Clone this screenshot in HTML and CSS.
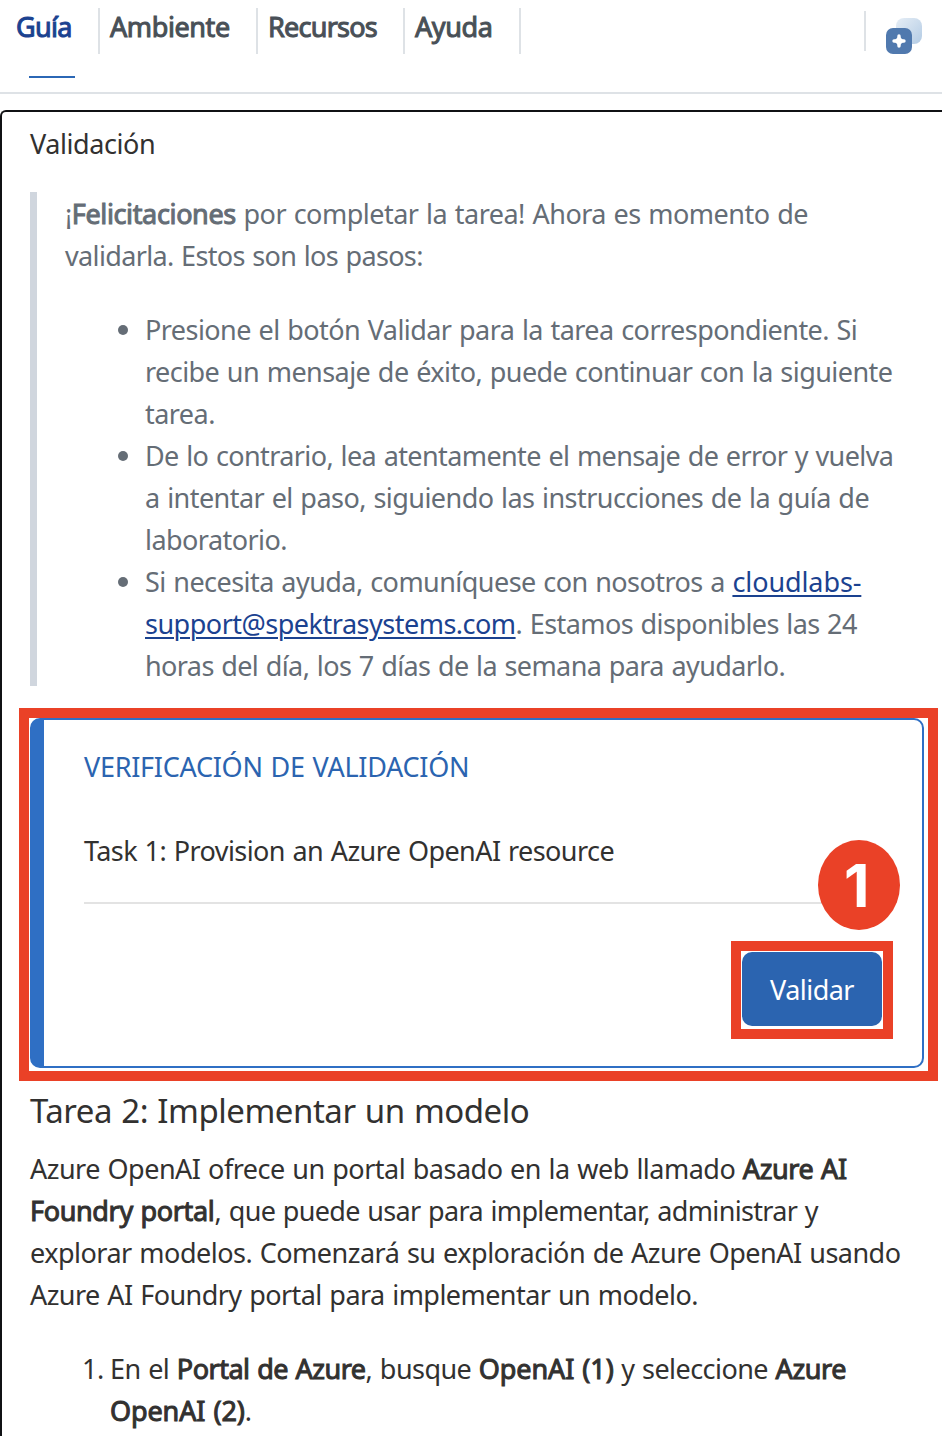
FILE: index.html
```html
<!DOCTYPE html>
<html lang="es">
<head>
<meta charset="utf-8">
<title>Guía</title>
<link rel="stylesheet" href="styles.css">
</head>
<body>
<header class="topbar">
  <nav class="tabs">
    <a class="tab tab-guide active">Guía</a>
    <a class="tab tab-env">Ambiente</a>
    <a class="tab tab-res">Recursos</a>
    <a class="tab tab-help">Ayuda</a>
  </nav>
  <div class="tools">
    <svg class="add-icon" width="36" height="36" viewBox="0 0 36 36">
      <defs><linearGradient id="g" x1="0" y1="0" x2="1" y2="1"><stop offset="0" stop-color="#e6eef6"/><stop offset="1" stop-color="#b3cbe4"/></linearGradient></defs>
      <rect x="10" y="0" width="26" height="26" rx="8" fill="url(#g)"/>
      <rect x="0" y="10" width="26" height="26" rx="7" fill="#5079ae"/>
      <path d="M13 18v10M8 23h10" stroke="#fff" stroke-width="3.400" stroke-linecap="round"/>
      <path d="M13 18l5 5l-5 5l-5-5z" fill="#fff"/>
    </svg>
  </div>
</header>
<main class="guide">
  <p class="subtitle">Validación</p>
  <blockquote class="note">
    <p>¡<b class="b30">Felicitaciones</b> <span class="loose">por completar la tarea! Ahora es momento de</span><br><span class="tight">validarla. Estos son los pasos:</span></p>
    <ul class="list">
      <li><p>Presione el botón Validar para la tarea correspondiente. Si<br>recibe un mensaje de éxito, puede continuar con la siguiente<br>tarea.</p></li>
      <li><p><span class="dense">De lo contrario, lea atentamente el mensaje de error y vuelva</span><br>a intentar el paso, siguiendo las instrucciones de la guía de<br>laboratorio.</p></li>
      <li><p>Si necesita ayuda, comuníquese con nosotros a <a class="link" href="#"><span class="wide">cloudlabs-</span><br><span class="email">support@spektrasystems.com</span></a>. <span class="dense">Estamos disponibles las 24<br>horas del día, los 7 días de la semana para ayudarlo.</span></p></li>
    </ul>
  </blockquote>
  <div class="highlight">
    <section class="card">
      <h3 class="card-title">VERIFICACIÓN DE VALIDACIÓN</h3>
      <p class="card-task">Task 1: Provision an Azure OpenAI resource</p>
      <div class="card-actions">
        <span class="button-highlight"><button class="button">Validar</button></span>
      </div>
      <span class="step">1</span>
    </section>
  </div>
  <h2 class="heading">Tarea 2: Implementar un modelo</h2>
  <p><span class="loose">Azure OpenAI ofrece un portal basado en la web llamado</span> <b>Azure AI</b><br><b class="b30">Foundry portal</b>, <span class="tight">que puede usar para implementar, administrar y</span><br><span class="loose">explorar modelos. Comenzará su exploración de Azure OpenAI usando</span><br>Azure AI Foundry portal para implementar un modelo.</p>
  <ol class="steps">
    <li><span class="num">1.</span><p>En el <b class="b40">Portal de Azure</b>, busque <b class="b0">OpenAI (1)</b> y seleccione <b>Azure</b><br><b class="b0">OpenAI (2)</b>.</p></li>
  </ol>
</main>
</body>
</html>
```
FILE: styles.css
```css
* { box-sizing: border-box; }
html, body { height: 1436px; overflow: hidden; }
body {
  margin: 0;
  background: #fff;
  color: #323130;
  font: 27px/42px "Noto Sans", sans-serif;
  letter-spacing: -0.55px;
  word-spacing: 1.1px;
}
p, h2, h3, ul, ol, blockquote { margin: 0; padding: 0; font-weight: 400; }
ul, ol { list-style: none; }
p, .heading, .tab { white-space: nowrap; }
b { font-weight: 400; -webkit-text-stroke: 1px currentColor; letter-spacing: -0.4px; }
.b30 { letter-spacing: -0.35px; }
.b40 { letter-spacing: -0.5px; }
.b0 { letter-spacing: -0.1px; }
.loose { letter-spacing: -0.51px; }
.tight { letter-spacing: -0.65px; }
.dense { letter-spacing: -0.6px; }
.wide { letter-spacing: -0.1px; }
.email { letter-spacing: -0.5px; }

.topbar {
  display: flex;
  justify-content: space-between;
  height: 94px;
  padding-top: 8px;
  border-bottom: 2px solid #dee2e6;
}
.tabs { display: flex; }
.tab {
  height: 46px;
  padding-left: 10px;
  line-height: 37px;
  letter-spacing: -0.4px;
  color: #495057;
  border-right: 2px solid #dee2e6;
  -webkit-text-stroke: 1px currentColor;
}
.tab-guide { width: 100px; padding-left: 16px; letter-spacing: -0.7px; }
.tab-env { width: 158px; }
.tab-res { width: 147px; letter-spacing: -0.75px; }
.tab-help { width: 116px; }
.active { color: #1b4290; }
.active::after {
  content: "";
  display: block;
  width: 46px;
  height: 2px;
  margin: 31px 0 0 13px;
  background: #2b67b5;
}
.tools {
  height: 40px;
  margin-top: 3px;
  padding: 7px 20px 0 20px;
  border-left: 2px solid #dee2e6;
}
.add-icon { display: block; }

.guide {
  height: 1326px;
  margin-top: 16px;
  padding: 11px 0 0 28px;
  border: solid #101114;
  border-width: 2px 0 0 2px;
  border-top-left-radius: 6px;
  overflow: hidden;
}
.subtitle { letter-spacing: -0.42px; }
.note {
  height: 494px;
  margin-top: 27px;
  padding: 1px 0 0 28px;
  border-left: 7px solid #d0d6de;
  color: #656d76;
}
.list { margin-top: 32px; padding-left: 53px; }
.list li { display: flex; gap: 17px; }
.list li::before {
  content: "";
  width: 10px;
  height: 10px;
  margin-top: 16px;
  border-radius: 50%;
  background: currentColor;
}
.link { color: #1b4290; text-decoration-thickness: 2px; text-underline-offset: 3px; }

.highlight {
  width: 919px;
  height: 373px;
  margin: 22px 0 0 -11px;
  padding-left: 1px;
  border: 10px solid #ea4127;
}
.card {
  position: relative;
  width: 894px;
  height: 350px;
  padding: 26px 40px 0;
  border: 2px solid #2f6fc4;
  border-left-width: 14px;
  border-radius: 10px;
}
.card-title { font-size: 27px; line-height: 42px; color: #2b64b0; letter-spacing: -0.27px; }
.card-task { margin-top: 42px; padding-bottom: 30px; border-bottom: 2px solid #e3e3e3; letter-spacing: -0.57px; }
.card-actions { display: flex; justify-content: flex-end; margin: 37px -11px 0 0; }
.button-highlight { height: 98px; padding: 1px; border: 10px solid #ea4127; }
.button {
  display: block;
  width: 140px;
  height: 74px;
  padding: 2px 0 0;
  border: 0;
  border-radius: 10px;
  background: #2b64b0;
  color: #fff;
  font: inherit;
  letter-spacing: inherit;
}
.step {
  position: absolute;
  top: 120px;
  right: 22px;
  width: 82px;
  height: 90px;
  padding-right: 5px;
  border-radius: 50%;
  background: #ea4127;
  color: #fff;
  font: bold 59px/91px Inter, sans-serif;
  text-align: center;
}

.heading { margin: 5px 0 12px; font-size: 33px; line-height: 50px; letter-spacing: -0.46px; }
.steps { margin-top: 32px; padding-left: 52px; }
.steps li { display: flex; }
.num { width: 28px; }
```
